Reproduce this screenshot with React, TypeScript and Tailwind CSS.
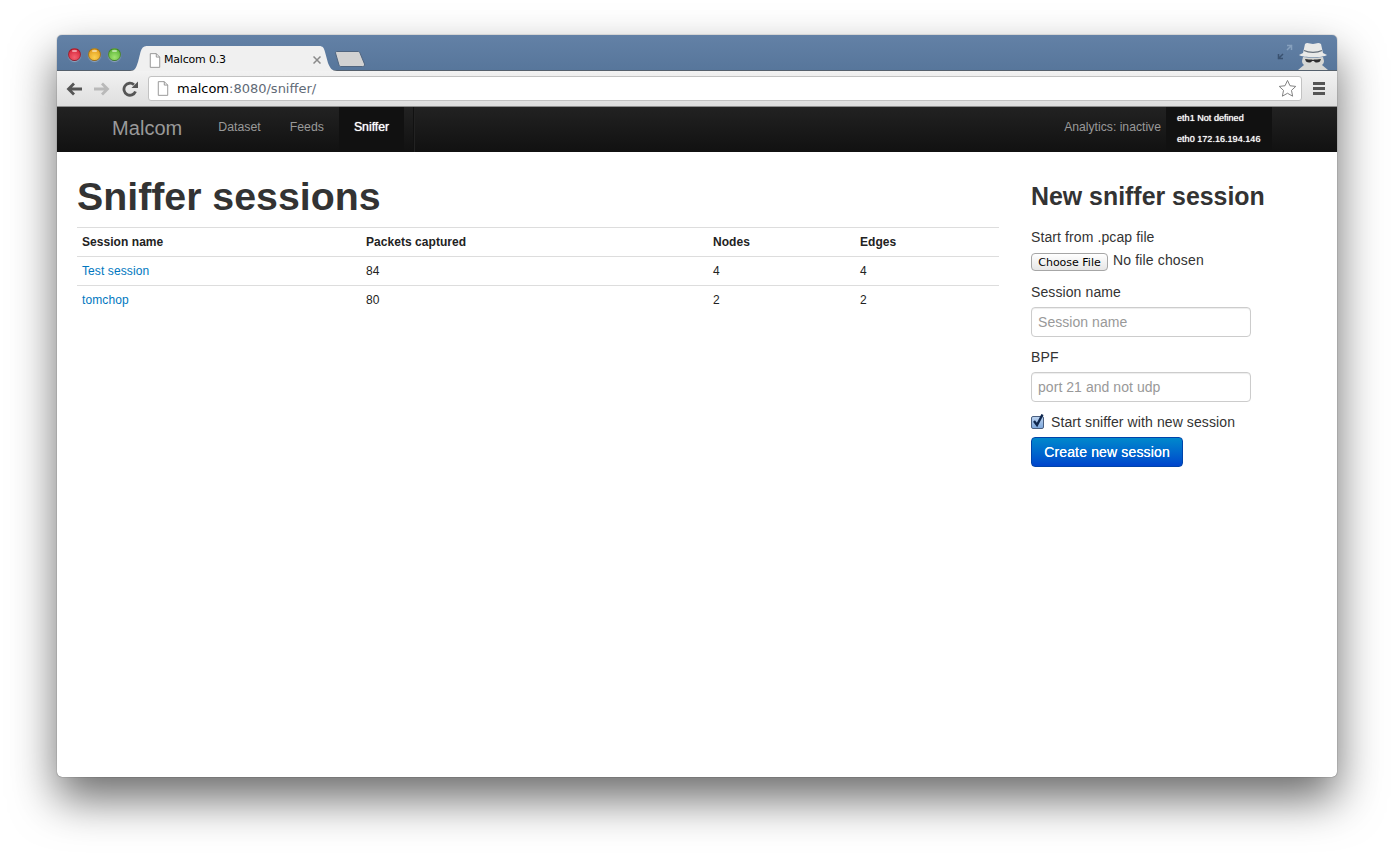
import React from 'react';

const sessions = [
  { name: 'Test session', packets: 84, nodes: 4, edges: 4 },
  { name: 'tomchop', packets: 80, nodes: 2, edges: 2 },
];

const PageIcon = ({ className }: { className: string }) => (
  <svg viewBox="0 0 14 17" className={className} fill="#fff" stroke="#8a8a8a" strokeWidth="1">
    <path d="M1.5 .5h7l4 4v12h-11z" />
    <path d="M8.5 .5v4h4" fill="none" />
  </svg>
);

const TrafficLight = ({ color }: { color: string }) => (
  <div className={`relative w-[13px] h-[13px] rounded-full border border-black/30 shadow-[0_1px_1px_rgba(255,255,255,0.35)] ${color}`}>
    <div className="absolute left-[3px] top-[1px] w-[5px] h-[2px] rounded-full bg-white/50" />
  </div>
);

const TitleBar = () => (
  <div className="relative flex items-end h-[36px] rounded-t-[5px] bg-gradient-to-b from-[#6381a6] to-[#57769b] border-b border-[#55606c]">
    <div className="flex gap-[7px] pl-[11px] pb-[9px] w-[73px] shrink-0">
      <TrafficLight color="bg-[radial-gradient(circle_at_50%_75%,#f4606f,#d01a30)]" />
      <TrafficLight color="bg-[radial-gradient(circle_at_50%_75%,#fbd050,#de9212)]" />
      <TrafficLight color="bg-[radial-gradient(circle_at_50%_75%,#a0e470,#4fab2c)]" />
    </div>
    {/* active tab */}
    <div className="relative w-[207px] h-[25px] -mb-px shrink-0">
      <svg viewBox="0 0 207 25" className="absolute inset-0 w-[207px] h-[25px]">
        <path d="M0 25c5 0 6-3 8-9l2.500-10c1-4 3-6 6-6h172.500c4 0 5 2 6 6l3 11c2 5 4 8 9 8z" fill="#f0f0f0" />
      </svg>
      <div className="relative flex items-center h-full pl-[19px] pr-[16px] pt-[3px]">
        <PageIcon className="w-[12px] h-[15px] mr-[3px]" />
        <span className="text-[11px] tracking-[-0.2px] text-black font-['DejaVu_Sans',sans-serif]">Malcom 0.3</span>
        <svg viewBox="0 0 8 8" className="ml-auto w-[8px] h-[8px]" fill="none" stroke="#8a8a8a" strokeWidth="1.500">
          <path d="M.5 .5l7 7M7.500 .5l-7 7" />
        </svg>
      </div>
    </div>
    {/* new tab button */}
    <svg viewBox="0 0 32 16" className="w-[32px] h-[16px] mb-[3px] -ml-[3px] shrink-0">
      <path d="M1.500 2c0-1 .5-1.500 1.500-1.500h21c1 0 1.500 .5 2 1.500l4.500 11c.5 1.500-.5 2.500-2 2.500H7c-1 0-1.500-.5-2-1.500z" fill="#d2d2d2" stroke="#50657f" />
    </svg>
    <div className="ml-auto flex items-end h-full shrink-0">
      <svg viewBox="0 0 16 16" className="w-[16px] h-[16px] mb-[10px] mr-[4px]" fill="none" strokeWidth="1.500">
        <path d="M1 15l5-5M1.500 10v4.500H6" stroke="#3a5270" />
        <path d="M15 1l-5 5M10 1.500h4.500V6" stroke="#86a0bd" />
      </svg>
      <svg viewBox="0 0 32 28" className="w-[32px] h-[28px] mr-[8px]">
        <path d="M8 2c2-2 5 0 8 0s5-2 8 0l2 9 4 2c-4 3-24 3-28 0l4-2z" fill="#e8e9e8" />
        <path d="M7 8.500c5 2.500 13 2.500 18 0" fill="none" stroke="#66707a" strokeWidth="1.200" />
        <path d="M6 15c6 1 14 1 20 0l1 4c0 2-1 3-2 4l6 5H1l6-5c-1-1-2-2-2-4z" fill="#d6d7d4" />
        <path d="M8 17c3 .5 5 .5 7 .5l1 .5 1-.5c2 0 4 0 7-.5l-1 2.500c-2 1.500-5 1.500-6-.5h-2c-1 2-4 2-6 .5z" fill="#2e2e2e" />
      </svg>
    </div>
  </div>
);

const Toolbar = () => (
  <div className="flex items-center h-[36px] bg-gradient-to-b from-[#f2f2f2] to-[#dedede] border-b border-[#8e8e8e]">
    <div className="flex items-center gap-[12px] pl-[9px] w-[91px] shrink-0">
      <svg viewBox="0 0 16 14" className="w-[16px] h-[14px]" fill="none" stroke="#555" strokeWidth="2.800">
        <path d="M16 7H3M8 1.500L2.500 7 8 12.500" />
      </svg>
      <svg viewBox="0 0 16 14" className="w-[16px] h-[14px]" fill="none" stroke="#b9b9b9" strokeWidth="2.800">
        <path d="M0 7h13M8 1.500L13.500 7 8 12.500" />
      </svg>
      <svg viewBox="0 0 16 16" className="w-[16px] h-[16px]" fill="none" stroke="#555" strokeWidth="2.800">
        <path d="M13.500 10.500A6 6 0 1 1 12 3.800" />
        <path d="M9.500 7H16V.5z" fill="#555" stroke="none" />
      </svg>
    </div>
    <div className="flex items-center w-[1154px] h-[25px] bg-white border border-[#c2c2c2] rounded-[3px] pl-[8px] pr-[4px] shrink-0">
      <PageIcon className="w-[12px] h-[15px] mr-[8px]" />
      <span className="text-[13px] text-[#5f6a76] font-['DejaVu_Sans',sans-serif]">
        <span className="text-black">malcom</span>:8080/sniffer/
      </span>
      <svg viewBox="0 0 20 20" className="ml-auto w-[19px] h-[19px]" fill="#fff" stroke="#7b7b7b">
        <path d="M10 1.500l2.600 5.600 6.100.7-4.500 4.200 1.200 6.100L10 15l-5.400 3.100 1.200-6.100L1.300 7.800l6.100-.7z" />
      </svg>
    </div>
    <div className="ml-[11px] flex flex-col gap-[2px]">
      <div className="w-[12px] h-[3px] bg-[#555]" />
      <div className="w-[12px] h-[3px] bg-[#555]" />
      <div className="w-[12px] h-[3px] bg-[#555]" />
    </div>
  </div>
);

const NavBar = () => (
  <div className="flex h-[45px] bg-gradient-to-b from-[#222222] to-[#111111] font-['Liberation_Sans',sans-serif]">
    <span className="ml-[55px] mt-[8px] text-[20px] tracking-[0.05px] leading-[26px] text-[#999999]">Malcom</span>
    <div className="flex ml-[21px] text-[12.3px] text-[#999999]">
      <a className="pl-[15px] pr-[14px] leading-[40px]">Dataset</a>
      <a className="px-[15px] leading-[40px]">Feeds</a>
      <a className="px-[15px] leading-[40px] w-[65px] bg-[#111111] text-white font-medium [text-shadow:0_0_1px_#fff]">Sniffer</a>
    </div>
    <div className="ml-[9px] w-[2px] border-l border-r border-l-[#111111] border-r-[#222222]" />
    <span className="ml-auto text-[12.2px] leading-[40px] text-[#999999]">Analytics: inactive</span>
    <div className="ml-[5px] mr-[65px] w-[106px] bg-[#111111] pl-[11px] pt-[6px] text-[9.1px] text-white [text-shadow:0_0_1px_#fff]">
      <div className="leading-[11px]">eth1 Not defined</div>
      <div className="mt-[10px] leading-[11px]">eth0 172.16.194.146</div>
    </div>
  </div>
);

const Field = ({ label, placeholder, top }: { label: string; placeholder: string; top: string }) => (
  <div className={top}>
    <label className="block text-[14px] tracking-[0.1px] leading-[20px] text-[#333333]">{label}</label>
    <input
      placeholder={placeholder}
      className="block mt-[5px] w-[220px] h-[30px] px-[6px] bg-white border border-[#cccccc] rounded-[4px] text-[14px] tracking-[0.05px] placeholder:text-[#999999] shadow-[inset_0_1px_1px_rgba(0,0,0,0.075)]"
    />
  </div>
);

export default function App() {
  return (
    <div className="w-[1394px] h-[856px] overflow-hidden bg-white pl-[57px] pt-[35px]">
      <div className="w-[1280px] h-[742px] flex flex-col bg-white rounded-[5px] shadow-[0_0_1px_rgba(0,0,0,0.8),0_22px_45px_rgba(0,0,0,0.58)]">
        <TitleBar />
        <Toolbar />
        <NavBar />
        <div className="flex pl-[20px] font-['Liberation_Sans',sans-serif] text-[#333333]">
          <div className="w-[922px] shrink-0">
            <h1 className="mt-[22px] text-[39.3px] leading-[44px] font-bold">Sniffer sessions</h1>
            <table className="mt-[9px] w-full table-fixed text-[12px] tracking-[0.1px] text-[#222222]">
              <thead>
                <tr className="border-t border-[#dddddd] h-[29px] text-left tracking-[0.05px]">
                  <th className="w-[284px] pl-[5px] font-bold">Session name</th>
                  <th className="w-[347px] pl-[5px] font-bold">Packets captured</th>
                  <th className="w-[147px] pl-[5px] font-bold">Nodes</th>
                  <th className="pl-[5px] font-bold">Edges</th>
                </tr>
              </thead>
              <tbody>
                {sessions.map((s) => (
                  <tr key={s.name} className="border-t border-[#dddddd] h-[29px]">
                    <td className="pl-[5px]"><a className="text-[#0077c0]">{s.name}</a></td>
                    <td className="pl-[5px]">{s.packets}</td>
                    <td className="pl-[5px]">{s.nodes}</td>
                    <td className="pl-[5px]">{s.edges}</td>
                  </tr>
                ))}
              </tbody>
            </table>
          </div>
          <div className="ml-[32px] flex-1">
            <h3 className="mt-[27px] text-[24.9px] leading-[34px] font-bold">New sniffer session</h3>
            <label className="block mt-[14px] text-[14px] tracking-[0.1px] leading-[20px] text-[#333333]">Start from .pcap file</label>
            <div className="flex items-center mt-[3px] h-[20px]">
              <button className="w-[77px] h-[18px] mt-[4px] rounded-[4px] border border-[#a6a6a6] bg-gradient-to-b from-white to-[#e6e6e6] text-[11px] leading-none text-black font-['DejaVu_Sans',sans-serif]">Choose File</button>
              <span className="ml-[5px] text-[14px] tracking-[0.15px] text-[#333333]">No file chosen</span>
            </div>
            <Field top="mt-[12px]" label="Session name" placeholder="Session name" />
            <Field top="mt-[10px]" label="BPF" placeholder="port 21 and not udp" />
            <label className="flex items-center mt-[10px] h-[20px] text-[14px] tracking-[0.1px] text-[#333333]">
              <span className="relative w-[13px] h-[13px] shrink-0">
                <input type="checkbox" defaultChecked className="block appearance-none w-[13px] h-[13px] rounded-[2px] border border-[#4a5f80] bg-gradient-to-b from-[#bcd3ef] to-[#7ea8dc]" />
                <svg viewBox="0 0 14 15" className="absolute left-[0px] -top-[3px] w-[14px] h-[15px]" fill="none" stroke="#10284f" strokeWidth="2.400">
                  <path d="M3 8l3 4 5.500-10.500" />
                </svg>
              </span>
              <span className="ml-[7px]">Start sniffer with new session</span>
            </label>
            <button className="block mt-[5px] w-[152px] h-[30px] rounded-[4px] bg-gradient-to-b from-[#0088cc] to-[#0044cc] border border-[#0044aa] text-[14px] tracking-[0.15px] font-medium text-white [text-shadow:0_0_0.6px_#fff]">Create new session</button>
          </div>
        </div>
      </div>
    </div>
  );
}
